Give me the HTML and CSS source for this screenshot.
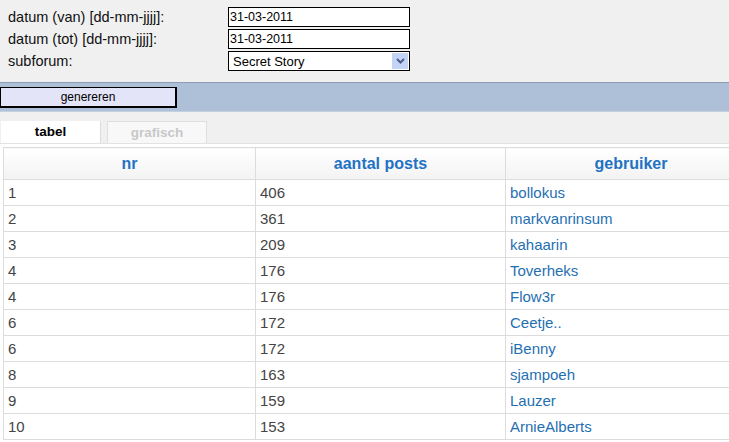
FILE: index.html
```html
<!DOCTYPE html>
<html lang="nl">
<head>
    <meta charset="UTF-8">
    <title>Statistieken</title>
    <link rel="stylesheet" href="styles.css">
</head>
<body>
    <form class="filter">
        <div class="filter-row">
            <label for="van">datum (van) [dd-mm-jjjj]:</label>
            <input type="text" id="van" value="31-03-2011">
        </div>
        <div class="filter-row">
            <label for="tot">datum (tot) [dd-mm-jjjj]:</label>
            <input type="text" id="tot" value="31-03-2011">
        </div>
        <div class="filter-row">
            <label for="subforum">subforum:</label>
            <span class="select-wrap">
                <select id="subforum">
                    <option>Secret Story</option>
                </select>
                <span class="select-arrow">
                    <svg width="9" height="6" viewBox="0 0 9 6"><path d="M1 1 L4.5 4.5 L8 1" fill="none" stroke="#4a5f8c" stroke-width="2"/></svg>
                </span>
            </span>
        </div>
    </form>

    <div class="action-bar">
        <button type="button">genereren</button>
    </div>

    <div class="tabs">
        <span class="tab active">tabel</span>
        <span class="tab">grafisch</span>
    </div>

    <div class="panel">
        <table class="stats">
            <colgroup>
                <col class="col-nr">
                <col class="col-posts">
                <col class="col-user">
            </colgroup>
            <thead>
                <tr><th>nr</th><th>aantal posts</th><th>gebruiker</th></tr>
            </thead>
            <tbody>
                <tr><td>1</td><td>406</td><td><a href="#">bollokus</a></td></tr>
                <tr><td>2</td><td>361</td><td><a href="#">markvanrinsum</a></td></tr>
                <tr><td>3</td><td>209</td><td><a href="#">kahaarin</a></td></tr>
                <tr><td>4</td><td>176</td><td><a href="#">Toverheks</a></td></tr>
                <tr><td>4</td><td>176</td><td><a href="#">Flow3r</a></td></tr>
                <tr><td>6</td><td>172</td><td><a href="#">Ceetje..</a></td></tr>
                <tr><td>6</td><td>172</td><td><a href="#">iBenny</a></td></tr>
                <tr><td>8</td><td>163</td><td><a href="#">sjampoeh</a></td></tr>
                <tr><td>9</td><td>159</td><td><a href="#">Lauzer</a></td></tr>
                <tr><td>10</td><td>153</td><td><a href="#">ArnieAlberts</a></td></tr>
            </tbody>
        </table>
    </div>
</body>
</html>
```

FILE: styles.css
```css
html, body {
    margin: 0;
    overflow: hidden;
}

body {
    font-family: "Liberation Sans", Arial, sans-serif;
    background-color: #f0f0f0;
    color: #000;
}

.filter {
    padding: 7px 0 0 8px;
}

.filter-row {
    display: flex;
    align-items: center;
    height: 20px;
    margin-bottom: 2px;
}

.filter-row label {
    width: 220px;
    font-size: 14.5px;
    color: #111;
}

.filter-row input {
    width: 182px;
    height: 20px;
    box-sizing: border-box;
    border: 1px solid #000;
    padding: 0 1px;
    font-family: inherit;
    font-size: 12.5px;
    background: #fff;
    outline: none;
}

.select-wrap {
    position: relative;
    display: block;
    width: 182px;
    height: 20px;
}

.select-wrap select {
    -webkit-appearance: none;
    appearance: none;
    width: 100%;
    height: 100%;
    box-sizing: border-box;
    border: 1px solid #000;
    border-radius: 0;
    padding: 0 0 0 4px;
    font-family: inherit;
    font-size: 13px;
    background: #fff;
    color: #000;
}

.select-arrow {
    position: absolute;
    top: 2px;
    right: 2px;
    width: 16px;
    height: 16px;
    background: #c5d4f6;
    display: flex;
    align-items: center;
    justify-content: center;
    pointer-events: none;
}

.action-bar {
    margin-top: 11px;
    height: 28px;
    background-color: #aebfd8;
    border-top: 1px solid #8e9db5;
    border-bottom: 1px solid #c4cfdf;
    display: flex;
    align-items: center;
}

.action-bar button {
    width: 177px;
    height: 21px;
    margin: 0;
    padding: 0;
    background-color: #e4e4f8;
    border: 1px solid #000;
    border-right-width: 2px;
    border-bottom-width: 2px;
    font-family: inherit;
    font-size: 12px;
    color: #000;
}

.tabs {
    display: flex;
    gap: 6px;
    margin-top: 9px;
    padding-left: 1px;
}

.tab {
    width: 100px;
    height: 22px;
    line-height: 22px;
    text-align: center;
    font-size: 13.5px;
    font-weight: bold;
    box-sizing: border-box;
}

.tab.active {
    background-color: #fff;
    border-right: 1px solid #dcdcdc;
    color: #000;
}

.tab:not(.active) {
    background-color: #f8f8f8;
    border: 1px solid #dedede;
    border-bottom: none;
    color: #c8c8c8;
}

.panel {
    background-color: #fff;
    border-top: 1px solid #e2e2e2;
    padding: 3px 0 0 3px;
    height: 300px;
}

.stats {
    border-collapse: collapse;
    table-layout: fixed;
    width: 753px;
}

.col-nr { width: 252px; }
.col-posts { width: 250px; }
.col-user { width: 251px; }

.stats th,
.stats td {
    border: 1px solid #dcdcdc;
    padding: 0 4px;
}

.stats th {
    height: 31px;
    font-size: 16px;
    font-weight: bold;
    color: #1f72c4;
    text-align: center;
    background: linear-gradient(#ffffff, #f3f3f3);
}

.stats td {
    height: 25px;
    font-size: 15px;
    color: #444;
    text-align: left;
}

.stats a {
    color: #1f6fb2;
    text-decoration: none;
}
```
